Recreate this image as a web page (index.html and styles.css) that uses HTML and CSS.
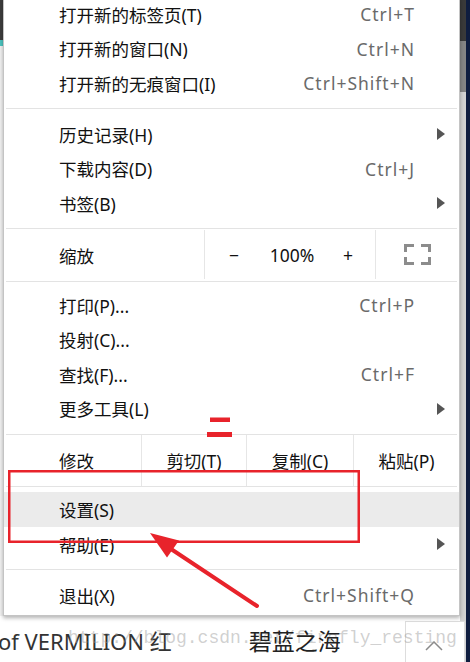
FILE: index.html
```html
<!DOCTYPE html>
<html lang="zh-CN">
<head>
  <meta charset="UTF-8">
  <title>Chrome 菜单 - 设置</title>
  <link rel="stylesheet" href="styles.css">
</head>
<body>
  <div class="screen">
    <div class="page">
      <div class="menu-row">
        <div class="left-strip"></div>

        <div class="menu">
          <div class="item"><span>打开新的标签页(T)</span><span class="key">Ctrl+T</span></div>
          <div class="item"><span>打开新的窗口(N)</span><span class="key">Ctrl+N</span></div>
          <div class="item"><span>打开新的无痕窗口(I)</span><span class="key">Ctrl+Shift+N</span></div>
          <div class="sep"></div>

          <div class="item has-sub"><span>历史记录(H)</span><span class="sub"><svg width="8" height="12" viewBox="0 0 8 12"><polygon points="0,0 8,6 0,12"/></svg></span></div>
          <div class="item"><span>下载内容(D)</span><span class="key">Ctrl+J</span></div>
          <div class="item has-sub"><span>书签(B)</span><span class="sub"><svg width="8" height="12" viewBox="0 0 8 12"><polygon points="0,0 8,6 0,12"/></svg></span></div>
          <div class="sep no-bottom"></div>

          <div class="zoom-row">
            <div class="cell-label zoom-label">缩放</div>
            <div class="zoom-ctrl">
              <span class="zoom-btn">−</span>
              <span class="zoom-value">100%</span>
              <span class="zoom-btn">+</span>
            </div>
            <div class="fullscreen">
              <svg width="27" height="21" viewBox="0 0 27 21">
                <path d="M1.5 8V1.5H10M17 1.5H25.5V8M1.5 13V19.5H10M17 19.5H25.5V13"/>
              </svg>
            </div>
          </div>
          <div class="sep no-top short-bottom"></div>

          <div class="item"><span>打印(P)...</span><span class="key">Ctrl+P</span></div>
          <div class="item"><span>投射(C)...</span></div>
          <div class="item"><span>查找(F)...</span><span class="key">Ctrl+F</span></div>
          <div class="item has-sub"><span>更多工具(L)</span><span class="sub"><svg width="8" height="12" viewBox="0 0 8 12"><polygon points="0,0 8,6 0,12"/></svg></span></div>
          <div class="sep no-bottom"></div>

          <div class="edit-row">
            <div class="cell-label edit-label">修改</div>
            <div class="edit-cell cut">剪切(T)</div>
            <div class="edit-cell copy">复制(C)</div>
            <div class="edit-cell paste">粘贴(P)</div>
          </div>
          <div class="sep no-top tiny-bottom"></div>

          <div class="item active"><span>设置(S)</span></div>
          <div class="item has-sub"><span>帮助(E)</span><span class="sub"><svg width="8" height="12" viewBox="0 0 8 12"><polygon points="0,0 8,6 0,12"/></svg></span></div>
          <div class="sep"></div>

          <div class="item last"><span>退出(X)</span><span class="key">Ctrl+Shift+Q</span></div>
        </div>
      </div>

      <div class="footer">
        <span class="post-title">of VERMILION 红</span>
        <span class="site-name">碧蓝之海</span>
        <div class="to-top">
          <svg width="18" height="10" viewBox="0 0 18 10"><polyline points="1,9 9,1 17,9"/></svg>
        </div>
        <span class="watermark">http://blog.csdn.net/firefly_resting</span>
      </div>
    </div>
    <div class="scrollbar"></div>
    <div class="desktop"></div>

    <!-- red markup drawn over the screenshot -->
    <svg class="marks" width="470" height="662" viewBox="0 0 470 662">
      <rect x="210" y="417.5" width="20" height="4.5"/>
      <rect x="207" y="432" width="25" height="5"/>
      <rect class="box" x="9.25" y="471.25" width="349.5" height="70.5"/>
      <line x1="257" y1="606" x2="168" y2="547"/>
      <polygon points="150,533 179,540.5 167,557.5"/>
    </svg>
  </div>
</body>
</html>
```

FILE: styles.css
```css
* {
  box-sizing: border-box;
}
body {
  margin: 0;
  background: #fff;
  font-family: "Noto Sans", "Noto Sans CJK SC", sans-serif;
  color: #111;
}
.screen {
  position: relative;
  display: flex;
  width: 470px;
  height: 662px;
  overflow: hidden;
}
.page {
  display: flex;
  flex-direction: column;
  width: 460px;
  background: #fff;
}
.menu-row {
  display: flex;
  position: relative;
  z-index: 2;
}
.left-strip {
  width: 3px;
  background: linear-gradient(#3d3d3d 0 40px, #4cc4c0 40px 46px, #f2f2f2 46px);
}
.menu {
  width: 457px;
  margin-top: -4px;
  background: #fff;
  border: 1px solid #c4c4c4;
  box-shadow: 0 2px 4px rgba(0, 0, 0, 0.3);
  font-size: 17.5px;
  padding-bottom: 3px;
}
.item {
  display: flex;
  align-items: center;
  height: 34.5px;
  padding: 0 45px 0 55px;
  white-space: nowrap;
}
.item.has-sub {
  padding-right: 14px;
}
.item.active {
  height: 35px;
  background: #ebebeb;
}
.key {
  margin-left: auto;
  color: #6a6a6a;
  letter-spacing: 1px;
  margin-right: -1px;
}
.sub {
  margin-left: auto;
  display: flex;
}
.sub svg {
  fill: #555;
}
.sep {
  height: 1px;
  background: #e3e3e3;
  margin: 7.5px 2px 8px;
}
.sep.no-bottom {
  margin-bottom: 0;
}
.sep.no-top {
  margin-top: 0;
}
.sep.short-bottom {
  margin-bottom: 6px;
}
.sep.tiny-bottom {
  margin-bottom: 5.25px;
}
.cell-label {
  display: flex;
  align-items: center;
  padding-left: 55px;
}
.zoom-row {
  display: flex;
  height: 52px;
}
.zoom-label {
  width: 200px;
}
.zoom-ctrl {
  width: 171px;
  display: flex;
  align-items: center;
  justify-content: space-between;
  padding: 0 20px 0 22px;
  border-left: 1px solid #e6e6e6;
  margin: 1px 0 2px;
}
.zoom-btn {
  width: 14px;
  text-align: center;
}
.zoom-value {
  padding-left: 2px;
}
.fullscreen {
  flex: 1;
  display: flex;
  align-items: center;
  justify-content: center;
  border-left: 1px solid #e6e6e6;
  margin: 1px 0 2px;
}
.fullscreen svg {
  stroke: #8c8c8c;
  stroke-width: 3;
  fill: none;
}
.edit-row {
  display: flex;
  height: 51px;
}
.edit-label {
  width: 137px;
}
.edit-cell {
  display: flex;
  align-items: center;
  justify-content: center;
  border-left: 1px solid #e6e6e6;
}
.edit-cell.cut {
  width: 105px;
}
.edit-cell.copy {
  width: 107px;
}
.edit-cell.paste {
  width: 106px;
}
.footer {
  position: relative;
  flex: 1;
  display: flex;
  align-items: center;
  padding-top: 2px;
  color: #333;
}
.post-title {
  margin-left: -2px;
  font-size: 22px;
  white-space: nowrap;
}
.site-name {
  margin-left: 77px;
  font-size: 23px;
  color: #222;
  position: relative;
  z-index: 1;
}
.to-top {
  position: absolute;
  left: 405px;
  top: 5px;
  width: 60px;
  height: 50px;
  border: 1px solid #ddd;
  background: #fff;
  padding: 12px 0 0 19px;
}
.to-top svg {
  fill: none;
  stroke: #8a8a8a;
  stroke-width: 1.5;
}
.watermark {
  position: absolute;
  left: 68px;
  top: 12px;
  font-family: "Liberation Mono", monospace;
  font-size: 18px;
  color: rgba(150, 150, 150, 0.45);
  white-space: nowrap;
}
.scrollbar {
  width: 6px;
  background: linear-gradient(#3a3a3a 0 41px, #858585 41px 92px, #d2d2d2 92px);
}
.desktop {
  width: 4px;
  background: #0f1d3f;
}
.marks {
  position: absolute;
  left: 0;
  top: 0;
  z-index: 3;
  pointer-events: none;
  fill: #e8232b;
  stroke: #e8232b;
}
.marks rect,
.marks polygon {
  stroke: none;
}
.marks .box {
  fill: none;
  stroke: #e8232b;
  stroke-width: 2.5;
}
.marks line {
  stroke-width: 4;
  stroke-linecap: round;
}
```
